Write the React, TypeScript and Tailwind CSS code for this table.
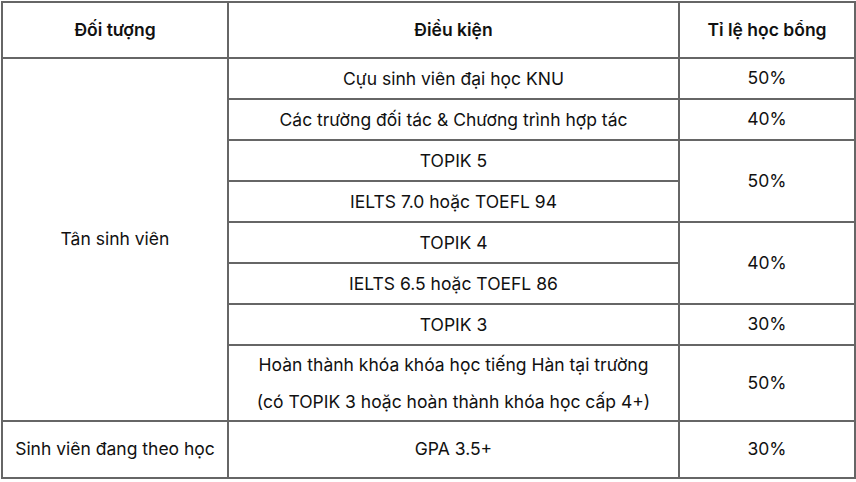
const rows: { cond: string[]; rate?: string; rateSpan?: number; h: number }[] = [
  { cond: ['Cựu sinh viên đại học KNU'], rate: '50%', h: 41 },
  { cond: ['Các trường đối tác & Chương trình hợp tác'], rate: '40%', h: 41 },
  { cond: ['TOPIK 5'], rate: '50%', rateSpan: 2, h: 41 },
  { cond: ['IELTS 7.0 hoặc TOEFL 94'], h: 41 },
  { cond: ['TOPIK 4'], rate: '40%', rateSpan: 2, h: 41 },
  { cond: ['IELTS 6.5 hoặc TOEFL 86'], h: 41 },
  { cond: ['TOPIK 3'], rate: '30%', h: 41 },
  {
    cond: ['Hoàn thành khóa khóa học tiếng Hàn tại trường', '(có TOPIK 3 hoặc hoàn thành khóa học cấp 4+)'],
    rate: '50%',
    h: 72,
  },
];

const cell = 'border-2 border-[#666] text-center align-middle p-0';

export default function App() {
  return (
    <div className="w-[856px] h-[482px] bg-white pt-px pl-px overflow-hidden font-['Inter',sans-serif] text-[17.5px] text-[#111]">
      <table className="border-collapse table-fixed w-[853px]">
        <colgroup>
          <col className="w-[226px]" />
          <col className="w-[451px]" />
          <col className="w-[176px]" />
        </colgroup>
        <thead>
          <tr className="h-[56px]">
            <th className={`${cell} font-semibold`}>Đối tượng</th>
            <th className={`${cell} font-semibold`}>Điều kiện</th>
            <th className={`${cell} font-semibold`}>Tỉ lệ học bổng</th>
          </tr>
        </thead>
        <tbody>
          {rows.map((r, i) => (
            <tr key={i} style={{ height: r.h }}>
              {i === 0 && (
                <td className={cell} rowSpan={rows.length}>
                  Tân sinh viên
                </td>
              )}
              <td className={`${cell} leading-[37px]`}>
                {r.cond.map((c) => (
                  <div key={c}>{c}</div>
                ))}
              </td>
              {r.rate && (
                <td className={cell} rowSpan={r.rateSpan ?? 1}>
                  {r.rate}
                </td>
              )}
            </tr>
          ))}
          <tr className="h-[57px]">
            <td className={cell}>Sinh viên đang theo học</td>
            <td className={cell}>GPA 3.5+</td>
            <td className={cell}>30%</td>
          </tr>
        </tbody>
      </table>
    </div>
  );
}
